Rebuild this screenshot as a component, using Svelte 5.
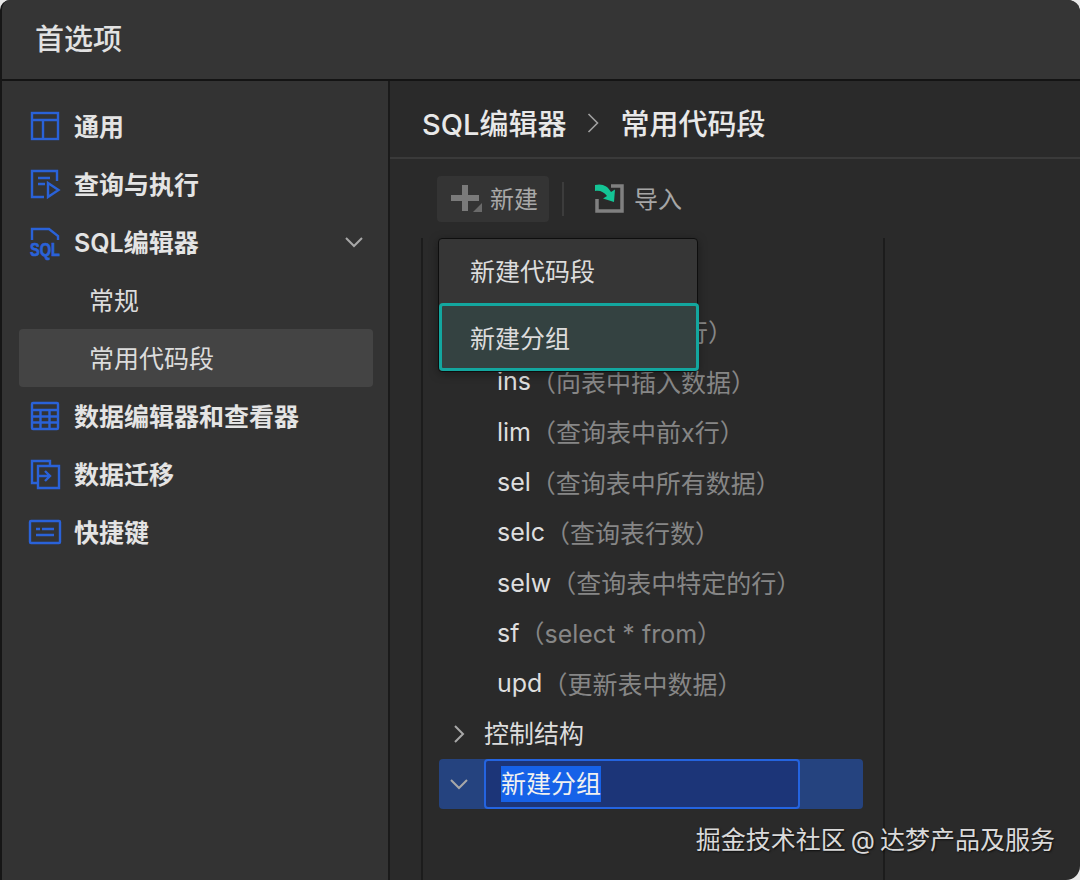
<script>
  const snippets = [
    { name: "del", desc: "（删除表中的行）" },
    { name: "ins", desc: "（向表中插入数据）" },
    { name: "lim", desc: "（查询表中前x行）" },
    { name: "sel", desc: "（查询表中所有数据）" },
    { name: "selc", desc: "（查询表行数）" },
    { name: "selw", desc: "（查询表中特定的行）" },
    { name: "sf", desc: "（select * from）" },
    { name: "upd", desc: "（更新表中数据）" },
  ];
</script>

<div class="window">
  <header class="titlebar">首选项</header>

  <div class="body">
    <nav class="sidebar">
      <div class="nav-row">
        <svg class="nav-icon" viewBox="0 0 30 30">
          <rect x="2" y="2" width="26" height="26" />
          <path d="M2 9H28M13 9V28" />
        </svg>
        <span>通用</span>
      </div>
      <div class="nav-row">
        <svg class="nav-icon" viewBox="0 0 30 30">
          <path d="M14 28H2V2H27V12" />
          <path d="M8 9H20M8 15H15" />
          <path d="M18 14L28.5 21L18 28Z" />
        </svg>
        <span>查询与执行</span>
      </div>
      <div class="nav-row">
        <svg class="nav-icon" viewBox="0 0 30 30">
          <path d="M2 13V2H19L28 9V13" />
          <text class="sql-text" x="0" y="29" textLength="30" lengthAdjust="spacingAndGlyphs">SQL</text>
        </svg>
        <span>SQL编辑器</span>
        <svg class="nav-chevron" viewBox="0 0 18 18"><path d="M1 5L9 13L17 5" /></svg>
      </div>
      <div class="nav-row sub">常规</div>
      <div class="nav-row sub active">常用代码段</div>
      <div class="nav-row">
        <svg class="nav-icon" viewBox="0 0 30 30">
          <rect x="2" y="2" width="26" height="26" rx="1" />
          <path d="M2 9H28M2 15.5H28M2 21.5H28M10.5 9V28M19.5 9V28" />
        </svg>
        <span>数据编辑器和查看器</span>
      </div>
      <div class="nav-row">
        <svg class="nav-icon" viewBox="0 0 30 30">
          <path d="M8 24H2V2H20V7" />
          <path d="M8 7H29V29H8Z" />
          <path d="M9 17H20M15 12L20 17L15 22" />
        </svg>
        <span>数据迁移</span>
      </div>
      <div class="nav-row">
        <svg class="nav-icon" viewBox="0 0 30 30">
          <rect x="0" y="4" width="30" height="22" rx="1" />
          <path d="M6 12H10M12 12H24M6 18H24" />
        </svg>
        <span>快捷键</span>
      </div>
    </nav>

    <main class="content">
      <div class="crumbs">
        <span>SQL编辑器</span>
        <svg class="crumb-sep" viewBox="0 0 12 22"><path d="M1.5 2L10.5 11L1.5 20" /></svg>
        <span>常用代码段</span>
      </div>

      <div class="toolbar">
        <button class="tool new">
          <svg class="plus" viewBox="0 0 32 28">
            <path d="M14 1V27M0 14H28" />
            <path class="corner" d="M31 19V28H22Z" />
          </svg>
          新建
        </button>
        <i class="tool-sep"></i>
        <button class="tool">
          <svg class="import" viewBox="0 0 30 30">
            <path d="M17 3H28V28H3V16" />
            <path class="arrow" d="M1 2C8 0 14 3 17 9L21 6.5L20 19L9 15.5L13 13C10 9 6 7 1 8Z" />
          </svg>
          导入
        </button>
      </div>

      <div class="panels">
        <div class="tree">
          {#each snippets as s}
            <div class="leaf"><span class="name">{s.name}</span><span class="desc">{s.desc}</span></div>
          {/each}
          <div class="group">
            <svg class="tree-arrow" viewBox="0 0 18 18"><path d="M5 1L13 9L5 17" /></svg>
            <span class="group-name">控制结构</span>
          </div>
          <div class="group editing">
            <svg class="tree-arrow" viewBox="0 0 18 18"><path d="M1 5L9 13L17 5" /></svg>
            <div class="rename"><span class="selected">新建分组</span></div>
          </div>

          <div class="popup">
            <div class="popup-item">新建代码段</div>
            <div class="popup-item focus">新建分组</div>
          </div>
        </div>
      </div>
    </main>
  </div>

  <div class="watermark">掘金技术社区 @ 达梦产品及服务</div>
</div>

<style>
  :global(body) {
    background: #e8e8e8;
  }
  .window {
    position: relative;
    box-sizing: border-box;
    width: 1080px;
    height: 880px;
    display: flex;
    flex-direction: column;
    overflow: hidden;
    background: #2a2a2a;
    border-left: 2px solid #161616;
    border-radius: 10px 12px 14px 0;
    font-family: Inter, "Noto Sans CJK SC", sans-serif;
    color: #e2e2e2;
  }
  .titlebar {
    flex: none;
    box-sizing: border-box;
    height: 81px;
    padding: 0 0 5px 33px;
    display: flex;
    align-items: center;
    background: #353535;
    border-bottom: 2px solid #141414;
    font-size: 29px;
    font-weight: 500;
  }
  .body {
    flex: 1;
    display: flex;
    min-height: 0;
  }
  .sidebar {
    flex: none;
    box-sizing: border-box;
    width: 388px;
    padding: 16px 15px 0 17px;
    background: #333333;
    border-right: 2px solid #1a1a1a;
  }
  .nav-row {
    height: 58px;
    display: flex;
    align-items: center;
    gap: 14px;
    padding: 0 10px 0 11px;
    border-radius: 4px;
    font-size: 25px;
    font-weight: 600;
    color: #e4e4e4;
  }
  .nav-row span {
    padding-bottom: 3px;
  }
  .nav-row.sub {
    padding-left: 70px;
    padding-bottom: 3px;
    box-sizing: border-box;
    font-weight: 400;
    color: #dcdcdc;
  }
  .nav-row.active {
    background: #444444;
  }
  .nav-icon {
    flex: none;
    width: 30px;
    height: 30px;
    overflow: visible;
    fill: none;
    stroke: #2a62d8;
    stroke-width: 2.4;
  }
  .sql-text {
    fill: #2a62d8;
    stroke: #2a62d8;
    stroke-width: 0.7;
    font-family: "Liberation Sans", sans-serif;
    font-size: 19px;
    font-weight: 700;
  }
  .nav-chevron {
    width: 18px;
    height: 18px;
    margin-left: auto;
    fill: none;
    stroke: #a8a8a8;
    stroke-width: 2;
  }
  .content {
    flex: 1;
    min-width: 0;
    display: flex;
    flex-direction: column;
  }
  .crumbs {
    flex: none;
    box-sizing: border-box;
    height: 78px;
    padding: 6px 0 0 32px;
    display: flex;
    align-items: center;
    gap: 20px;
    border-bottom: 2px solid #3a3a3a;
    font-size: 29px;
    font-weight: 500;
    color: #e8e8e8;
  }
  .crumb-sep {
    width: 12px;
    height: 22px;
    margin: 2px 1px 0;
    fill: none;
    stroke: #a0a0a0;
    stroke-width: 1.6;
  }
  .toolbar {
    flex: none;
    height: 79px;
    padding: 0 0 0 47px;
    display: flex;
    align-items: center;
    gap: 13px;
  }
  .tool {
    height: 46px;
    padding: 0 0 2px;
    display: flex;
    align-items: center;
    border: none;
    border-radius: 4px;
    background: none;
    font: inherit;
    font-size: 24px;
    color: #a6a6a6;
  }
  .tool.new {
    width: 112px;
    padding-left: 14px;
    box-sizing: border-box;
    background: #343434;
    gap: 7px;
    color: #a8a8a8;
  }
  .tool-sep {
    width: 2px;
    height: 34px;
    background: #3c3c3c;
  }
  .plus {
    width: 32px;
    height: 28px;
    fill: none;
    stroke: #7a7a7a;
    stroke-width: 6;
  }
  .plus .corner {
    fill: #6a6a6a;
    stroke: none;
  }
  .import {
    width: 30px;
    height: 30px;
    margin: 0 10px 0 17px;
    fill: none;
    stroke: #808080;
    stroke-width: 3.5;
  }
  .import .arrow {
    fill: #14c495;
    stroke: none;
  }
  .panels {
    flex: 1;
    min-height: 0;
    display: flex;
    padding-left: 31px;
  }
  .tree {
    position: relative;
    box-sizing: border-box;
    width: 464px;
    padding: 68px 20px 0 16px;
    border-left: 2px solid #1c1c1c;
    border-right: 2px solid #1c1c1c;
  }
  .leaf {
    height: 50.3px;
    display: flex;
    align-items: center;
    padding-left: 58px;
    font-size: 25px;
    white-space: nowrap;
  }
  .name {
    color: #dedede;
  }
  .desc {
    padding-bottom: 1px;
    color: #868686;
  }
  .group {
    height: 50.3px;
    display: flex;
    align-items: center;
    gap: 16px;
    padding-left: 11px;
    font-size: 25px;
    color: #dcdcdc;
  }
  .group-name {
    padding-bottom: 3px;
  }
  .tree-arrow {
    flex: none;
    width: 18px;
    height: 18px;
    fill: none;
    stroke: #a8a8a8;
    stroke-width: 2;
  }
  .group.editing {
    box-sizing: border-box;
    height: 50px;
    border-radius: 4px;
    background: #25437f;
  }
  .rename {
    box-sizing: border-box;
    width: 316px;
    height: 50px;
    padding-left: 15px;
    display: flex;
    align-items: center;
    border: 2px solid #2464e0;
    border-radius: 4px;
    background: #1c3578;
  }
  .selected {
    height: 36px;
    line-height: 36px;
    background: #1662e8;
    color: #f0f0f0;
  }
  .popup {
    position: absolute;
    top: 0;
    left: 15px;
    box-sizing: border-box;
    width: 260px;
    display: flex;
    flex-direction: column;
    border: 1px solid #0e0e0e;
    border-radius: 4px;
    background: #363636;
    box-shadow: 0 2px 10px rgba(0, 0, 0, 0.35);
    font-size: 25px;
    color: #dcdcdc;
  }
  .popup-item {
    box-sizing: border-box;
    height: 64px;
    display: flex;
    align-items: center;
    padding: 0 0 3px 31px;
  }
  .popup-item.focus {
    height: 68px;
    margin-right: -2px;
    padding: 0 0 0 28px;
    border: 3px solid #13a79f;
    border-radius: 4px;
    background: #344241;
  }
  .watermark {
    position: absolute;
    right: 25px;
    bottom: 24px;
    font-size: 25px;
    line-height: 32px;
    word-spacing: -2px;
    white-space: nowrap;
    color: #dadada;
    text-shadow: 1px 1px 2px rgba(0, 0, 0, 0.7);
  }
</style>
